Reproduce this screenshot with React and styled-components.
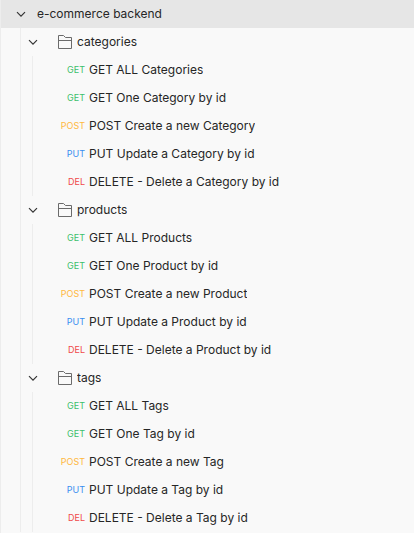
import React, { useState } from "react";
import styled, { createGlobalStyle } from "styled-components";

const GlobalStyle = createGlobalStyle`
  *, *::before, *::after { box-sizing: border-box; }
  body { margin: 0; background: #f9f9f9; }
`;

const METHOD_COLORS = {
  GET: "#3dc06c",
  POST: "#ffb83d",
  PUT: "#3b8ff0",
  DEL: "#f04a4a",
};

const Sidebar = styled.nav`
  min-height: 100vh;
  overflow: hidden;
  border-left: 1px solid #ededed;
  background: #f9f9f9;
  color: #262626;
  font-family: Inter, "Liberation Sans", sans-serif;
  font-size: 12px;
  line-height: 16px;
`;

const List = styled.ul`
  margin: 0;
  padding: 0;
  list-style: none;
`;

const FolderList = styled(List)`
  margin-left: 19px;
  border-left: 1px solid #ededed;
`;

const RequestList = styled(List)`
  margin-left: 11px;
  border-left: 1px solid #ededed;
`;

const Row = styled.button`
  display: flex;
  align-items: center;
  width: 100%;
  height: 28px;
  margin: 0;
  padding: 0;
  border: 0;
  background: transparent;
  color: inherit;
  font: inherit;
  text-align: left;
  white-space: nowrap;
  cursor: pointer;
`;

const CollectionRow = styled(Row)`
  gap: 8px;
  padding-left: 12px;
  background: #e6e6e6;
`;

const FolderRow = styled(Row)`
  padding-left: 4px;
`;

const RequestRow = styled(Row)`
  gap: 4px;
  padding-left: 24px;
`;

const Chevron = styled.svg`
  flex: none;
  width: 16px;
  height: 16px;
  fill: none;
  stroke: #333333;
  stroke-width: 1.15;
  transform: ${(p) => (p.$open ? "none" : "rotate(-90deg)")};
`;

const Folder = styled.svg`
  flex: none;
  width: 16px;
  height: 16px;
  margin: 0 4px 0 16px;
  fill: none;
  stroke: #6b6b6b;
  stroke-width: 1;
  stroke-linejoin: round;
`;

const Method = styled.span`
  flex: none;
  width: 28px;
  color: ${(p) => METHOD_COLORS[p.$method]};
  font-size: 9px;
  text-align: right;
`;

const Name = styled.span`
  overflow: hidden;
  text-overflow: ellipsis;
`;

const folders = [
  {
    name: "categories",
    requests: [
      ["GET", "GET ALL Categories"],
      ["GET", "GET One Category by id"],
      ["POST", "POST Create a new Category"],
      ["PUT", "PUT Update a Category by id"],
      ["DEL", "DELETE - Delete a Category by id"],
    ],
  },
  {
    name: "products",
    requests: [
      ["GET", "GET ALL Products"],
      ["GET", "GET One Product by id"],
      ["POST", "POST Create a new Product"],
      ["PUT", "PUT Update a Product by id"],
      ["DEL", "DELETE - Delete a Product by id"],
    ],
  },
  {
    name: "tags",
    requests: [
      ["GET", "GET ALL Tags"],
      ["GET", "GET One Tag by id"],
      ["POST", "POST Create a new Tag"],
      ["PUT", "PUT Update a Tag by id"],
      ["DEL", "DELETE - Delete a Tag by id"],
    ],
  },
];

function ChevronIcon({ open }) {
  return (
    <Chevron viewBox="0 0 16 16" $open={open} aria-hidden="true">
      <path d="M4 6.2 8 10.2 12 6.2" />
    </Chevron>
  );
}

function FolderIcon() {
  return (
    <Folder viewBox="0 0 16 16" aria-hidden="true">
      <path d="M1.5 14.5V1.5H6.5L8.5 3.5H14.5V14.5Z" />
      <path d="M1.5 6.5H14.5" />
    </Folder>
  );
}

function FolderItem({ folder }) {
  const [open, setOpen] = useState(true);
  return (
    <li>
      <FolderRow type="button" aria-expanded={open} onClick={() => setOpen(!open)}>
        <ChevronIcon open={open} />
        <FolderIcon />
        <Name>{folder.name}</Name>
      </FolderRow>
      {open && (
        <RequestList>
          {folder.requests.map(([method, name]) => (
            <li key={name}>
              <RequestRow type="button">
                <Method $method={method}>{method}</Method>
                <Name>{name}</Name>
              </RequestRow>
            </li>
          ))}
        </RequestList>
      )}
    </li>
  );
}

export default function App() {
  const [open, setOpen] = useState(true);
  return (
    <>
      <GlobalStyle />
      <Sidebar aria-label="Collections">
        <CollectionRow type="button" aria-expanded={open} onClick={() => setOpen(!open)}>
          <ChevronIcon open={open} />
          <Name>e-commerce backend</Name>
        </CollectionRow>
        {open && (
          <FolderList>
            {folders.map((folder) => (
              <FolderItem key={folder.name} folder={folder} />
            ))}
          </FolderList>
        )}
      </Sidebar>
    </>
  );
}
